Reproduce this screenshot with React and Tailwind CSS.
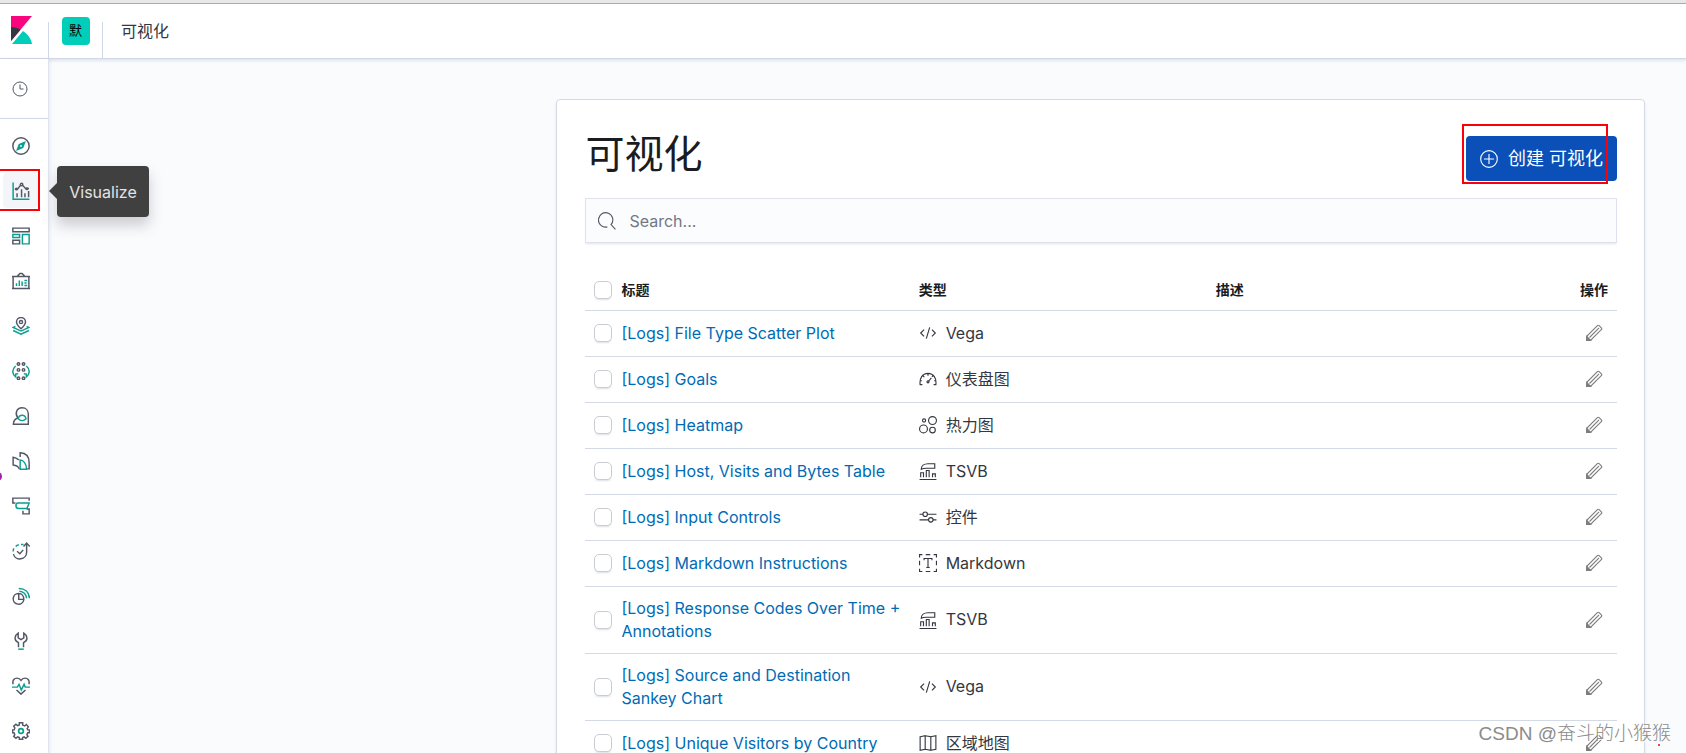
import clsx from 'clsx'

const FONT = "font-['Inter','Noto_Sans_CJK_SC',sans-serif]"

const DARK = '#535766'
const TEAL = '#0a9e90'

/* App icons: 32x32 grid, dark strokes with a teal accent */
const APP_ICONS = {
  discover: (
    <>
      <circle cx="16" cy="16" r="14.5" />
      <path d="M22.5 9.5 19 18.5 9.5 22.5 13 13.5Z" fill={TEAL} stroke={TEAL} />
      <circle cx="16" cy="16" r="1.6" fill="#fff" stroke="none" />
    </>
  ),
  visualize: (
    <>
      <path d="M2 1v29.5h29" stroke={TEAL} />
      <path d="M9 27v-7M17 27V13M23 27v-7M29.5 27V16" />
      <path d="M5 12.500h5l5-6.500M19 6l5 5.500h6" />
      <circle cx="17" cy="4.500" r="2.200" />
      <circle cx="8" cy="12.500" r="1.500" />
      <circle cx="26.500" cy="12" r="1.500" />
    </>
  ),
  dashboard: (
    <>
      <path d="M1.500 2h29v6.500h-29Z" />
      <path d="M1.500 13.500h12v5h-12ZM18.500 13.500h12V30h-12Z" stroke={TEAL} />
      <path d="M1.500 23.500h12V30h-12Z" />
    </>
  ),
  canvas: (
    <>
      <path d="M0 8h32M0 29.500h32M2 8v22M30 8v22M9 8l5-5.500h4L23 8" />
      <path d="M8 25v-5M13 25V15M18 25v-8M22 15h5M22 19.500h4M22 24h5" stroke={TEAL} />
    </>
  ),
  maps: (
    <>
      <path d="M16 21C11 16.500 8 12.500 8 9a8 8 0 0 1 16 0c0 3.500-3 7.500-8 12Z" />
      <circle cx="16" cy="9" r="2.800" />
      <path d="M6 16.500 2 18.500l14 6.500 14-6.500-4-2M2 24l14 6.500L30 24" stroke={TEAL} />
    </>
  ),
  machineLearning: (
    <>
      <circle cx="11.500" cy="3.500" r="2.200" />
      <circle cx="20.500" cy="3.500" r="2.200" />
      <circle cx="11.500" cy="14" r="2.200" />
      <circle cx="20.500" cy="14" r="2.200" />
      <circle cx="11.500" cy="29" r="2.200" />
      <circle cx="20.500" cy="29" r="2.200" />
      <path d="M6.500 7C3 10 1 13.500 1.500 18c.5 4 2.500 7 5 8.500V21.500L11 21M25.500 7c3.500 3 5.500 6.500 5 11-.5 4-2.500 7-5 8.500V21.500L21 21" stroke={TEAL} />
    </>
  ),
  metrics: (
    <>
      <path d="M10.500 19.500C4.500 12 8 1.500 18 1.500c7 0 11 5 11 11V30.500H2.500c0-5 3.500-9.500 8-11Z" />
      <path d="M11 21c1-5 4-6.500 7-6.500s6 1.500 7 6.500c-4 4-10 4-14 0Z" stroke={TEAL} />
    </>
  ),
  logs: (
    <>
      <path d="M13 30C11 25 7 23.500 2 23V9.500c4 .5 7 2 10 4.500" />
      <path d="M14.500 9V1.500C25 2 30.500 9 30.500 19v11H27" />
      <path d="M14.500 14C21 15 25 20 26 30.500H14.500Z" stroke={TEAL} />
    </>
  ),
  apm: (
    <>
      <path d="M6 10.500H1.500V2h29v4.500M19.500 24.500V30h11v-8.500H26" />
      <path d="M10 10.500h20.500l-4 10H12c-4 0-5-2-5-5s1-5 3-5Z" stroke={TEAL} />
    </>
  ),
  uptime: (
    <>
      <path d="M26 3v15a12 12 0 0 1-23.500 3.500M20.500 8 26 2l5.500 6" />
      <path d="M9 16.500 14 21l6-7" />
      <path d="M2 17c0-2 .5-4 1.500-5.500M6.500 8c1.500-1.500 3.500-2.500 5.500-3M16 4.500h4.500" stroke={TEAL} />
    </>
  ),
  siem: (
    <>
      <path d="M12 11.500a9.500 9.500 0 1 0 9 11M12 11.500V22h9c0-6-3.500-10.500-9-10.500Z" />
      <path d="M12 2.500C23 2.500 30.500 9 31 20M13 7.500c7 .5 12 5 13 12.500" stroke={TEAL} />
    </>
  ),
  devTools: (
    <>
      <path d="M11.500 27V19C7 17 5 14 5.500 10c.3-3.500 2.500-6 5.500-8v8.500l5 3 5-3V2c3 2 5.200 4.500 5.500 8 .5 4-1.500 7-6 9v8" />
      <path d="M11 30.500h10" stroke={TEAL} />
    </>
  ),
  monitoring: (
    <>
      <path d="M2 13C0 6 4 2 9 2c3 0 5.500 1.500 7 4 1.500-2.500 4-4 7-4 5 0 9 4 7 11M8 23l8 7.500 8-7.500" />
      <path d="M0 18h9.500l3-5 4 10 5-10 2 5H32" stroke={TEAL} />
    </>
  ),
  management: (
    <>
      <path d="M13 1.500h6v4l3.500 1.500 3-2.500L29 8.500l-2 3.500 1 2h3v5h-3l-1.500 3.500 2 3-4 3.500-3-2.500L19 27.500v3h-6v-3l-3-1-3 2.500L3 25.500l2-3L3.500 19H1v-5h3l1-3.500L3 7.500 7 4l3 2.500 3-1Z" />
      <circle cx="16" cy="16" r="4.200" stroke={TEAL} strokeWidth="3" />
    </>
  ),
}

/* Glyphs: 16x16 grid, single colour */
const GLYPHS = {
  clock: (
    <>
      <circle cx="8" cy="8" r="7" />
      <path d="M8 3.500V8h3.500" />
    </>
  ),
  vega: <path d="M4.500 5 1.500 8l3 3M11.500 5l3 3-3 3M9.500 3l-3 10" />,
  gauge: (
    <>
      <path d="M3 13H1C.3 7.500 3 3 8 3s7.700 4.500 7 10h-2M8 3v2M3.500 5l1.200 1.300M12.500 5l-1 1M1 9.500h1.500M13.500 9.500H15" />
      <path d="m8.500 10 2.500-3" />
      <circle cx="8" cy="10.500" r=".9" />
    </>
  ),
  heatmap: (
    <>
      <circle cx="4.500" cy="4" r="1.400" />
      <circle cx="12" cy="4" r="3.500" />
      <circle cx="4" cy="11.500" r="3.500" />
      <circle cx="12" cy="12.500" r="2.500" />
    </>
  ),
  tsvb: (
    <>
      <path d="M.5 15.500h15M1.500 13.500v-4H4v4M6.500 13.500v-6H9v6M12 13.500v-3h2.500v3" />
      <path d="M2 6.500C2 3.500 4.500 1.500 8 1.500h6v4H6.500Q3.500 5.500 2 6.500Z" />
    </>
  ),
  controls: (
    <>
      <path d="M.5 5.500h3M7.500 5.500h8M.5 10.500h8M12.500 10.500h3" />
      <circle cx="5.500" cy="5.500" r="2" />
      <circle cx="10.500" cy="10.500" r="2" />
    </>
  ),
  markdown: (
    <>
      <path d="M.5 3V.5H3M6 .5h4M13 .5h2.500V3M15.500 6v4M15.500 13v2.500H13M10 15.500H6M3 15.500H.5V13M.5 10V6" />
      <path d="M4.500 5.500V4h7v1.500M8 4v8M6.500 12h3" />
    </>
  ),
  map: <path d="M1 2.500 5.500 1.500v12L1 14.500ZM5.500 1.500l5 1v12l-5-1M10.500 2.500l4.500-1v12l-4.500 1" />,
  search: <path d="M8.300 13.200A6.400 6.400 0 1 1 11.600 11.200L15.500 15.500" />,
  plus: (
    <>
      <circle cx="8" cy="8" r="7.400" />
      <path d="M8 3.500v9M3.500 8h9" />
    </>
  ),
  pencil: (
    <>
      <path d="M1.500 14.500 2 10.500 11 1.500q.8-.8 1.600 0l1.900 1.900q.8.800 0 1.600L5.500 14Z" />
      <path d="M4 12 12.500 3.500" />
      <path d="M1.500 14.500v-3.500l3.500 3.500Z" fill="currentColor" />
    </>
  ),
}

const NAV = [
  { key: 'discover', label: 'Discover' },
  { key: 'visualize', label: 'Visualize', active: true },
  { key: 'dashboard', label: 'Dashboard' },
  { key: 'canvas', label: 'Canvas' },
  { key: 'maps', label: 'Maps' },
  { key: 'machineLearning', label: 'Machine Learning' },
  { key: 'metrics', label: 'Metrics' },
  { key: 'logs', label: 'Logs' },
  { key: 'apm', label: 'APM' },
  { key: 'uptime', label: 'Uptime' },
  { key: 'siem', label: 'SIEM' },
  { key: 'devTools', label: 'Dev Tools' },
  { key: 'monitoring', label: 'Stack Monitoring' },
  { key: 'management', label: 'Management' },
]

const ROWS = [
  { title: '[Logs] File Type Scatter Plot', icon: 'vega', type: 'Vega' },
  { title: '[Logs] Goals', icon: 'gauge', type: '仪表盘图' },
  { title: '[Logs] Heatmap', icon: 'heatmap', type: '热力图' },
  { title: '[Logs] Host, Visits and Bytes Table', icon: 'tsvb', type: 'TSVB' },
  { title: '[Logs] Input Controls', icon: 'controls', type: '控件' },
  { title: '[Logs] Markdown Instructions', icon: 'markdown', type: 'Markdown' },
  { title: '[Logs] Response Codes Over Time + Annotations', icon: 'tsvb', type: 'TSVB' },
  { title: '[Logs] Source and Destination Sankey Chart', icon: 'vega', type: 'Vega' },
  { title: '[Logs] Unique Visitors by Country', icon: 'map', type: '区域地图' },
]

function AppIcon({ name }) {
  return (
    <svg viewBox="0 0 32 32" className="size-[18px]" fill="none" stroke={DARK} strokeWidth="2.6" aria-hidden="true">
      {APP_ICONS[name]}
    </svg>
  )
}

function Glyph({ name, className }) {
  return (
    <svg viewBox="0 0 16 16" className={clsx('shrink-0', className ?? 'size-[18px]')} fill="none" stroke="currentColor" aria-hidden="true">
      {GLYPHS[name]}
    </svg>
  )
}

function KibanaLogo() {
  return (
    <svg viewBox="0 0 21 28" className="h-7 w-[21px]" aria-hidden="true">
      <path d="M0 0h21L0 25Z" fill="#f9067f" />
      <path d="M0 11c3.500 0 6.800 1 9.600 2.700L0 25Z" fill="#343741" />
      <path d="M12 15c4.600 3 8 7.500 9 13H1Z" fill="#00cdb8" />
    </svg>
  )
}

function Checkbox({ label }) {
  return (
    <input type="checkbox" aria-label={label}
      className="block size-[18px] appearance-none rounded-[5px] border border-[#cbccd1] bg-white shadow-[0_2px_2px_-1px_rgba(152,162,179,0.35)]" />
  )
}

function TopBar() {
  return (
    <header className="relative z-10 flex h-[55px] shrink-0 border-b border-[#d0d7e6] bg-white shadow-[0_2px_3px_rgba(152,162,179,0.25)]">
      <a href="#home" aria-label="Kibana" className="flex w-12 items-start pt-3 pl-[11px]"><KibanaLogo /></a>
      <div className="mt-[18px] flex w-[55px] justify-center border-x border-[#d0d7e6]">
        <button className="-mt-[5px] flex size-7 items-center justify-center rounded bg-[#00ceb9] text-[13px] text-black">默</button>
      </div>
      <h2 className="ml-[18px] flex h-[54px] items-center text-base text-[#343741]">可视化</h2>
    </header>
  )
}

function SideNav() {
  return (
    <nav className="relative z-20 w-[49px] shrink-0 border-r border-[#dfe4ee] bg-white shadow-[1px_0_3px_rgba(152,162,179,0.2)]">
      <a href="#recent" aria-label="Recently viewed" className="flex h-[60px] items-center border-b border-[#d0d7e6] pl-3 text-[#535766]">
        <Glyph name="clock" className="size-4" />
      </a>
      <ul className="pt-1">
        {NAV.map(({ key, label, active }) => (
          <li key={key} className="relative flex h-[45px] items-center">
            <a href={`#${key}`} aria-label={label}
              className={clsx('ml-[3px] flex h-[35px] w-[35px] items-center pl-[9px]', active && 'rounded bg-[#f3f5f9]')}>
              <AppIcon name={key} />
            </a>
            {active && (
              <>
                <span className="absolute top-[1px] -left-1 h-[42px] w-11 border-2 border-[#fb0007]" />
                <div role="tooltip" className="absolute -top-[2px] left-[57px] flex h-[51px] w-[92px] items-center justify-center rounded bg-[#404040] text-base text-[#e4e4e4] shadow-[0_8px_14px_rgba(65,65,80,0.25)]">
                  <svg viewBox="0 0 8 16" className="absolute top-[17px] -left-2 h-4 w-2" aria-hidden="true"><path d="M8 0v16L0 8Z" fill="#404040" /></svg>
                  {label}
                </div>
              </>
            )}
            {key === 'logs' && <span className="absolute top-[34px] -left-[7px] size-[9px] rounded-full bg-[#9c1fa8]" />}
          </li>
        ))}
      </ul>
    </nav>
  )
}

function VisualizeTable() {
  return (
    <table className="mt-[27px] w-full table-fixed border-collapse text-left text-base text-[#343741]">
      <colgroup>
        <col className="w-[27px]" />
        <col />
        <col />
        <col />
        <col className="w-[113px]" />
      </colgroup>
      <thead>
        <tr className="h-10 border-b border-[#d3dae6] text-sm text-[#1a1c21]">
          <th className="pl-[9px]"><Checkbox label="Select all" /></th>
          <th className="px-[9px] font-bold">标题</th>
          <th className="px-[9px] font-bold">类型</th>
          <th className="px-[9px] font-bold">描述</th>
          <th className="px-[9px] text-right font-bold">操作</th>
        </tr>
      </thead>
      <tbody>
        {ROWS.map((row) => (
          <tr key={row.title} className="h-[46px] border-b border-[#d3dae6] leading-[23px]">
            <td className="pl-[9px]"><Checkbox label={`Select ${row.title}`} /></td>
            <td className="px-[9px] py-[10px]"><a href="#edit" className="text-[#006bb4]">{row.title}</a></td>
            <td className="px-[9px]"><span className="flex items-center gap-[9px]"><Glyph name={row.icon} />{row.type}</span></td>
            <td />
            <td className="px-[14px]">
              <button aria-label={`Edit ${row.title}`} className="ml-auto block text-[#7d7d7d]"><Glyph name="pencil" /></button>
            </td>
          </tr>
        ))}
      </tbody>
    </table>
  )
}

export default function App() {
  return (
    <div className={clsx('relative flex h-screen flex-col overflow-hidden bg-[#fafbfd]', FONT)}>
      <div className="h-1 shrink-0 border-b border-[#acacac] bg-[#e8e8e8]" />
      <TopBar />
      <div className="flex min-h-0 flex-1">
        <SideNav />
        <main className="min-w-0 flex-1">
          <section className="mt-10 mr-[41px] ml-[31%] rounded border border-[#d3dae6] bg-white pt-[25px] pr-[27px] pb-7 pl-7 shadow-[0_2px_3px_rgba(152,162,179,0.2)]">
            <div className="flex items-start justify-between">
              <h1 className="text-[39px] leading-[58px] text-[#1a1c21]">可视化</h1>
              <div className="relative mt-[11px]">
                <button className="flex h-[45px] items-center gap-[10px] rounded bg-[#0a50b8] px-[14px] text-lg text-white">
                  <Glyph name="plus" />创建 可视化
                </button>
                <span className="pointer-events-none absolute -top-3 right-[9px] -bottom-[3px] -left-1 border-2 border-[#fb0007]" />
              </div>
            </div>
            <label className="mt-[15px] flex h-[45px] items-center gap-[13px] border border-[#dfe2ee] bg-[#fbfcfd] px-3 text-[#535766] shadow-[0_2px_2px_-1px_rgba(152,162,179,0.3)]">
              <Glyph name="search" />
              <input type="search" aria-label="Search" placeholder="Search..." className="min-w-0 flex-1 bg-transparent text-base outline-none placeholder:text-[#737784]" />
            </label>
            <VisualizeTable />
          </section>
        </main>
      </div>
      <span className="absolute right-[15px] bottom-[6px] z-30 font-['Liberation_Sans','Noto_Sans_CJK_SC',sans-serif] text-[19px] leading-[26px] font-light text-[#8b8b8b] [text-shadow:1px_1px_0_#fff]">CSDN @奋斗的小猴猴</span>
      <span className="absolute right-[26px] bottom-[7px] z-30 size-[2px] rounded-full bg-[#fb0007]" />
    </div>
  )
}
